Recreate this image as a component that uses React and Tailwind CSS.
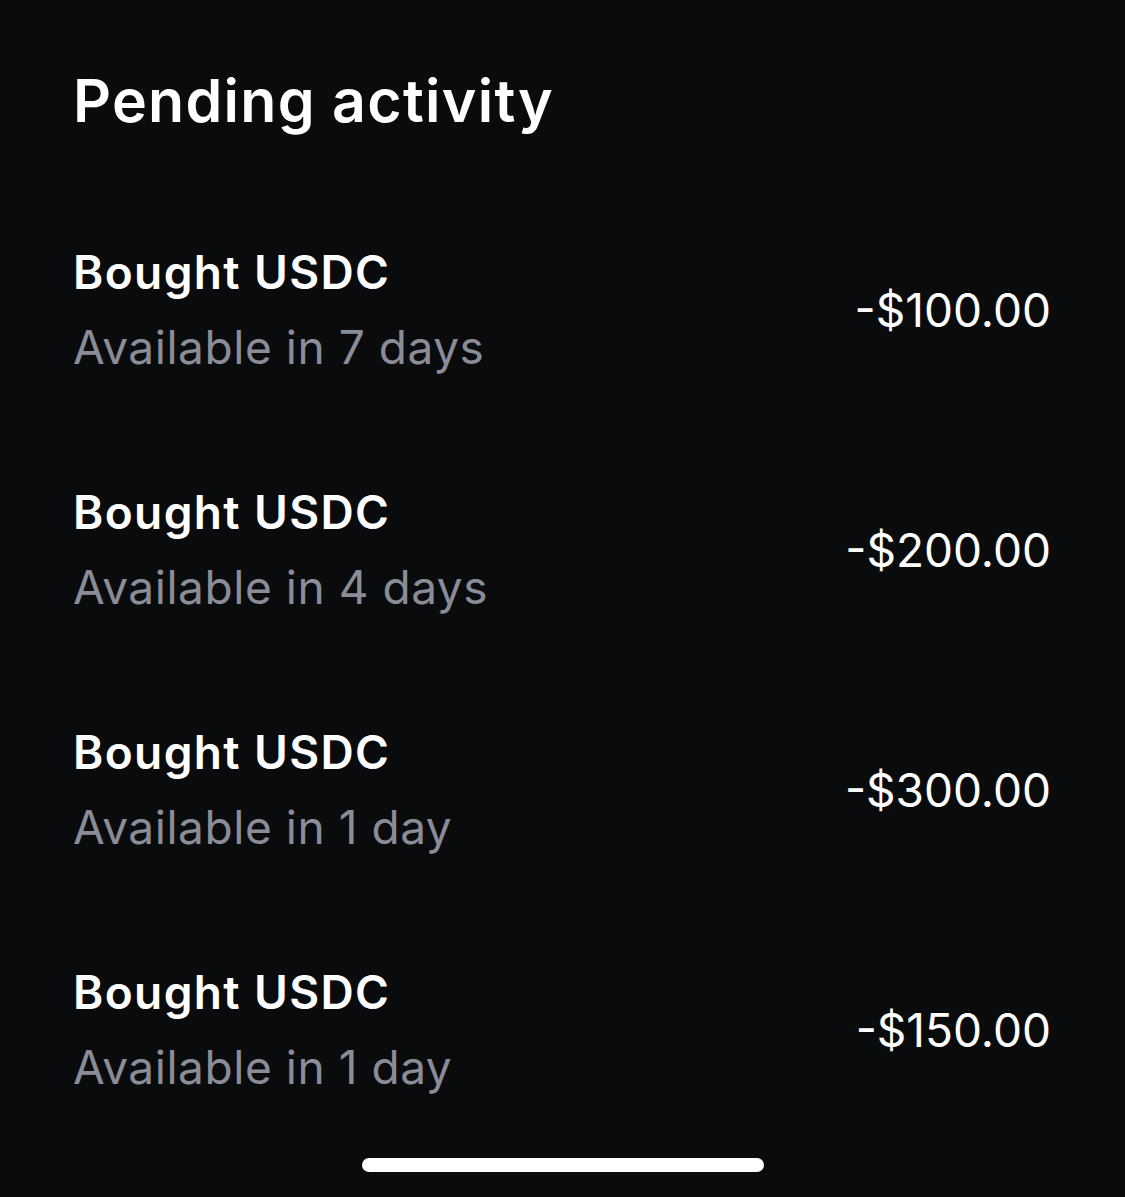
import React from "react";

const rows = [
  { title: "Bought USDC", sub: "Available in 7 days", amount: "-$100.00" },
  { title: "Bought USDC", sub: "Available in 4 days", amount: "-$200.00" },
  { title: "Bought USDC", sub: "Available in 1 day", amount: "-$300.00" },
  { title: "Bought USDC", sub: "Available in 1 day", amount: "-$150.00" },
];

export default function App() {
  return (
    <div className="flex h-[1197px] w-[1125px] flex-col bg-[#0a0b0d] pl-[73px] pr-[74px] text-white [font-family:Inter,'Noto_Sans',sans-serif]">
      <h1 className="mt-[66px] text-[59px] font-semibold leading-[70px] tracking-[0.022em]">Pending activity</h1>
      <div className="mt-[99px] flex flex-col gap-[90px]">
        {rows.map((row, i) => (
          <div key={i} className="flex items-center justify-between">
            <div>
              <p className="text-[46px] font-semibold leading-[75px] tracking-[0.03em]">{row.title}</p>
              <p className="text-[46px] leading-[75px] tracking-[0.012em] text-[#8a8d98]">{row.sub}</p>
            </div>
            <p className="text-[46px] leading-[75px]">{row.amount}</p>
          </div>
        ))}
      </div>
      <div className="mt-auto mb-[25px] flex justify-center">
        <div className="ml-[2px] h-[14px] w-[402px] rounded-full bg-white" />
      </div>
    </div>
  );
}
